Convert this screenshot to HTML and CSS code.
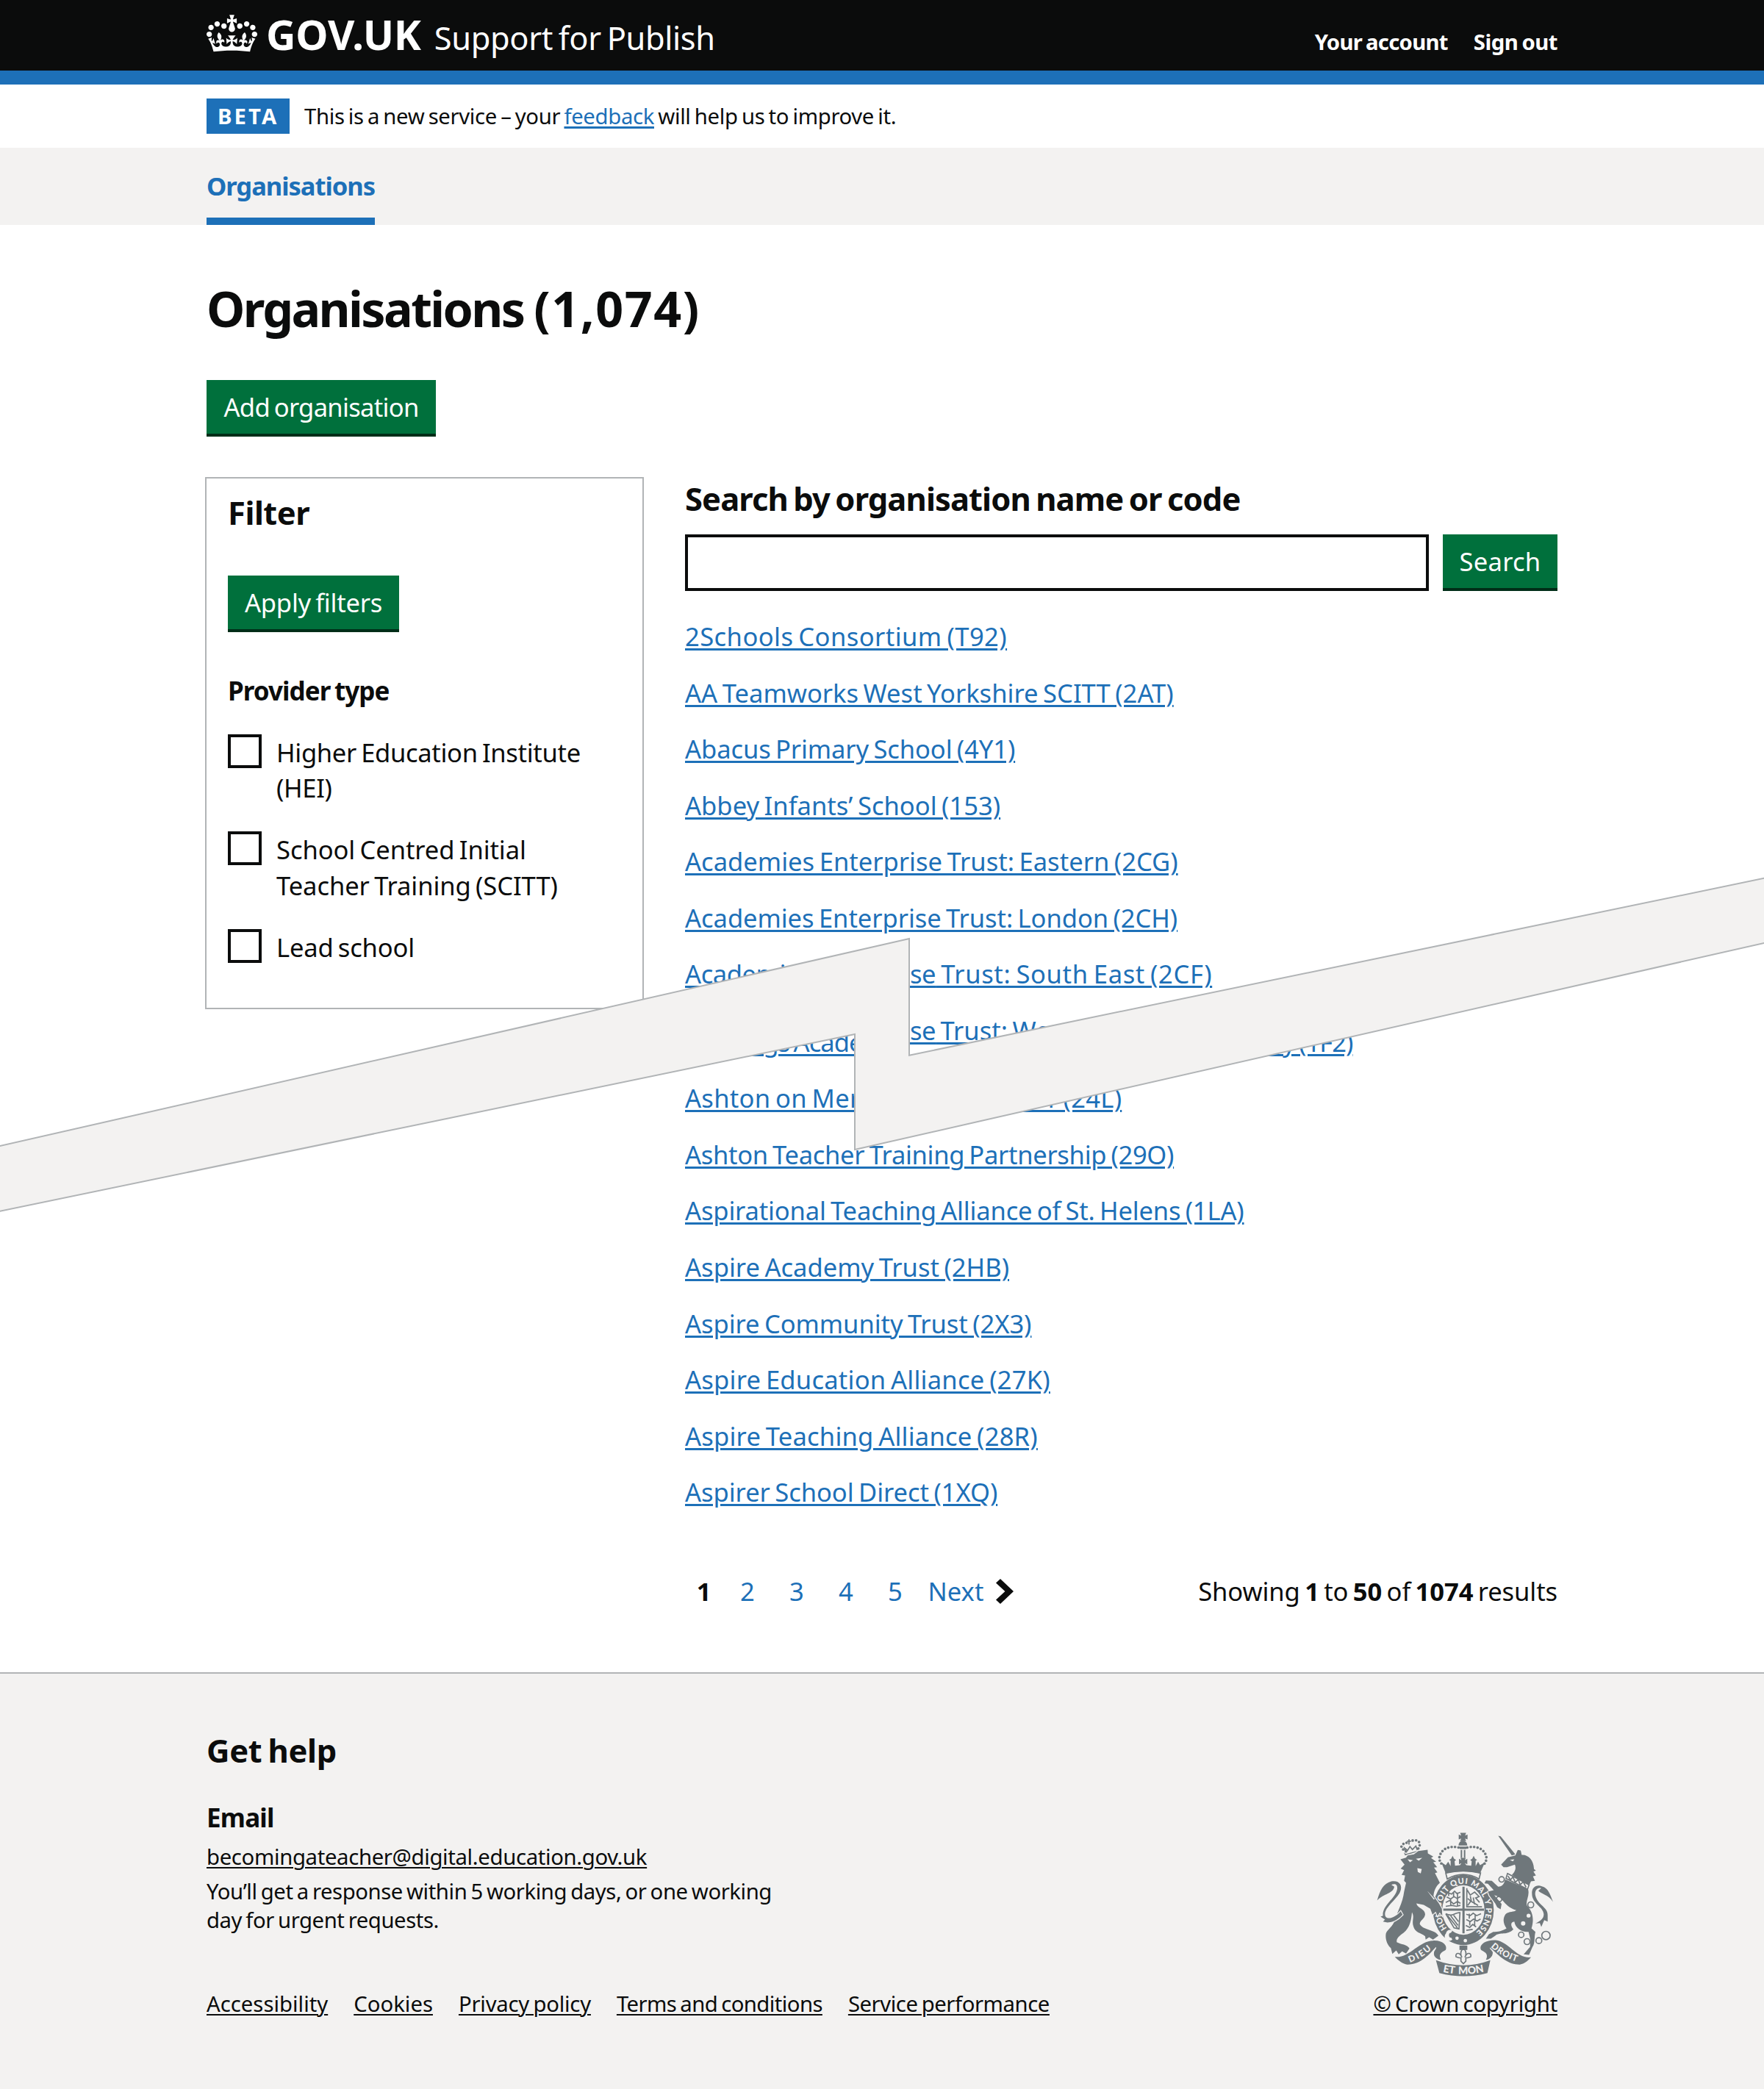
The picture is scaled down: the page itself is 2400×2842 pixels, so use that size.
FILE: index.html
```html
<!DOCTYPE html>
<html lang="en">
<head>
<meta charset="utf-8">
<title>Organisations - Support for Publish</title>
<link rel="stylesheet" href="styles.css">
</head>
<body>
<header class="header">
  <div class="width header-row">
    <svg class="crown" viewBox="0 0 132 97" aria-hidden="true"><path fill="currentColor" fill-rule="evenodd" d="M25 30.2c3.5 1.5 7.7-.2 9.1-3.7 1.5-3.6-.2-7.8-3.9-9.2-3.6-1.4-7.6.3-9.1 3.9-1.4 3.5.3 7.5 3.9 9zM9 39.5c3.6 1.5 7.8-.2 9.2-3.7 1.5-3.6-.2-7.8-3.9-9.1-3.6-1.5-7.6.2-9.1 3.8-1.4 3.5.3 7.5 3.8 9zM4.4 57.2c3.5 1.5 7.7-.2 9.1-3.8 1.5-3.6-.2-7.7-3.9-9.1-3.5-1.5-7.6.3-9.1 3.8-1.4 3.5.3 7.6 3.9 9.1zm38.3-21.4c3.5 1.5 7.7-.2 9.1-3.8 1.5-3.6-.2-7.7-3.9-9.1-3.6-1.5-7.6.3-9.1 3.8-1.3 3.6.4 7.7 3.9 9.1zm64.4-5.6c-3.6 1.5-7.8-.2-9.1-3.7-1.5-3.6.2-7.8 3.8-9.2 3.6-1.4 7.7.3 9.2 3.9 1.3 3.5-.4 7.5-3.9 9zm15.9 9.3c-3.6 1.5-7.7-.2-9.1-3.7-1.5-3.6.2-7.8 3.7-9.1 3.6-1.5 7.7.2 9.2 3.8 1.5 3.5-.3 7.5-3.8 9zm4.7 17.7c-3.6 1.5-7.8-.2-9.2-3.8-1.5-3.6.2-7.7 3.9-9.1 3.6-1.5 7.7.3 9.2 3.8 1.3 3.5-.4 7.6-3.9 9.1zM89.3 35.8c-3.6 1.5-7.8-.2-9.2-3.8-1.4-3.6.2-7.7 3.9-9.1 3.6-1.5 7.7.3 9.2 3.8 1.4 3.6-.3 7.7-3.9 9.1zM69.7 17.7l8.9 4.7V9.3l-8.9 2.8c-.2-.3-.5-.6-.9-.9L72.4 0H59.6l3.5 11.2c-.3.3-.6.5-.9.9l-8.8-2.8v13.1l8.8-4.7c.3.3.6.7.9.9l-5 15.4v.1c-.2.8-.4 1.6-.4 2.4 0 4.1 3.1 7.5 7 8.1h.2c.3 0 .7.1 1 .1.4 0 .7 0 1-.1h.2c4-.6 7.1-4.1 7.1-8.1 0-.8-.1-1.7-.4-2.4V34l-5.1-15.4c.4-.2.7-.6 1-.9zM66 92.8c16.9 0 32.8 1.1 47.1 3.2 4-16.9 8.9-26.7 14-33.5l-9.6-3.4c1 4.9 1.1 7.2 0 10.2-1.5-1.4-3-4.3-4.2-8.7L108.6 76c2.8-2 5-3.2 7.5-3.3-4.4 9.4-10 11.9-13.6 11.2-4.3-.8-6.3-4.6-5.6-7.9 1-4.7 5.7-5.9 8-.5 4.3-8.7-3-11.4-7.6-8.8 7.1-7.2 7.9-13.5 2.1-21.1-8 6.1-8.1 12.3-4.5 20.8-4.7-5.4-12.1-2.5-9.5 6.2 3.4-5.2 7.9-2 7.2 3.1-.6 4.3-6.4 7.8-13.5 7.2-10.3-.9-10.9-8-11.2-13.8 2.5-.5 7.1 1.8 11 7.3L80.2 60c-4.1 4.4-8 5.3-12.3 5.4 1.4-4.4 8-11.6 8-11.6H55.5s6.4 7.2 7.9 11.6c-4.2-.1-8-1-12.3-5.4l1.4 16.4c3.9-5.5 8.5-7.7 10.9-7.3-.3 5.8-.9 12.8-11.1 13.8-7.2.6-12.9-2.9-13.5-7.2-.7-5 3.8-8.3 7.1-3.1 2.7-8.7-4.6-11.6-9.4-6.2 3.7-8.5 3.6-14.7-4.6-20.8-5.8 7.6-5 13.9 2.2 21.1-4.7-2.6-11.9.1-7.7 8.8 2.3-5.5 7.1-4.2 8.1.5.7 3.3-1.3 7.1-5.7 7.9-3.5.7-9-1.8-13.5-11.2 2.5.1 4.7 1.3 7.5 3.3l-4.7-15.4c-1.2 4.4-2.7 7.2-4.3 8.7-1.1-3-.9-5.3 0-10.2l-9.5 3.4c5 6.9 9.9 16.7 14 33.5 14.8-2.1 30.8-3.2 47.7-3.2z"/></svg>
    <span class="logo">GOV.UK</span>
    <span class="service">Support for Publish</span>
    <nav class="account">
      <a class="account-you">Your account</a>
      <a class="account-out">Sign out</a>
    </nav>
  </div>
</header>
<div class="width phase">
  <strong class="tag">BETA</strong>
  <span class="phase-text">This is a new service – your <a class="link">feedback</a> will help us to improve it.</span>
</div>
<nav class="primary">
  <div class="width">
    <a class="primary-link">Organisations</a>
  </div>
</nav>
<main class="width main">
  <h1 class="title">Organisations <span class="title-count">(1,074)</span></h1>
  <button class="button button-add">Add organisation</button>
  <div class="columns">
    <aside class="filter">
      <h2 class="heading heading-filter">Filter</h2>
      <button class="button button-apply">Apply filters</button>
      <h3 class="subheading provider">Provider type</h3>
      <label class="check"><span class="box"></span><span class="check-text check-hei">Higher Education Institute (HEI)</span></label>
      <label class="check"><span class="box"></span><span class="check-text">School Centred Initial Teacher Training (SCITT)</span></label>
      <label class="check"><span class="box"></span><span class="check-text check-lead">Lead school</span></label>
    </aside>
    <section class="results">
      <h2 class="heading heading-search">Search by organisation name or code</h2>
      <div class="search">
        <input class="search-input" type="text" aria-label="Search by organisation name or code">
        <button class="button button-search">Search</button>
      </div>
      <ul class="list list-top">
        <li><a class="link">2Schools Consortium (T92)</a></li>
        <li><a class="link">AA Teamworks West Yorkshire SCITT (2AT)</a></li>
        <li><a class="link">Abacus Primary School (4Y1)</a></li>
        <li><a class="link">Abbey Infants’ School (153)</a></li>
        <li><a class="link">Academies Enterprise Trust: Eastern (2CG)</a></li>
        <li><a class="link">Academies Enterprise Trust: London (2CH)</a></li>
        <li><a class="link"><span class="tight">Academies Enterprise</span> Trust: South East (2CF)</a></li>
        <li><a class="link"><span class="tight">Academies Enterprise</span> Trust: West (2CE)</a></li>
      </ul>
      <ul class="list list-bottom">
        <li><a class="link">Ark Kings Academy and Teaching Partnership Academy (1F2)</a></li>
        <li><a class="link">Ashton on Mersey School SCITT (24L)</a></li>
        <li><a class="link">Ashton Teacher Training Partnership (29O)</a></li>
        <li><a class="link">Aspirational Teaching Alliance of St. Helens (1LA)</a></li>
        <li><a class="link">Aspire Academy Trust (2HB)</a></li>
        <li><a class="link">Aspire Community Trust (2X3)</a></li>
        <li><a class="link">Aspire Education Alliance (27K)</a></li>
        <li><a class="link">Aspire Teaching Alliance (28R)</a></li>
        <li><a class="link">Aspirer School Direct (1XQ)</a></li>
      </ul>
      <div class="paging">
        <div class="pages">
          <strong class="page page-current">1</strong><a class="page">2</a><a class="page">3</a><a class="page">4</a><a class="page">5</a>
          <a class="next">Next</a>
          <svg class="chevron" viewBox="0 0 24 34" aria-hidden="true"><path fill="currentColor" d="M6 0 24 17 6 34 0 28.6 12.4 17 0 5.4z"/></svg>
        </div>
        <p class="showing">Showing <b>1</b> to <b>50</b> of <b>1074</b> results</p>
      </div>
    </section>
  </div>
</main>
<footer class="footer">
  <div class="width footer-row">
    <div>
      <h2 class="heading heading-help">Get help</h2>
      <h3 class="subheading heading-email">Email</h3>
      <p class="small"><a class="footer-link mail">becomingateacher@digital.education.gov.uk</a></p>
      <p class="small response">You’ll get a response within 5 working days, or one working day for urgent requests.</p>
      <div class="small footer-links">
        <a class="footer-link">Accessibility</a>
        <a class="footer-link">Cookies</a>
        <a class="footer-link privacy">Privacy policy</a>
        <a class="footer-link terms">Terms and conditions</a>
        <a class="footer-link performance">Service performance</a>
      </div>
    </div>
    <div class="crest-column">
      <svg class="crest" viewBox="70 38 723 590" aria-hidden="true">
        <defs>
          <path id="garter" d="M332 358A92 108 0 0 1 516 358A92 108 0 0 1 424 466"/>
          <path id="garter-low" d="M358 433A92 108 0 0 1 332 352"/>
          <path id="scroll-left" d="M204 572Q260 552 304 508"/>
          <path id="scroll-mid" d="M330 607Q424 630 518 607"/>
          <path id="scroll-right" d="M534 506Q580 550 650 571"/>
        </defs>
        <!-- garter and shield -->
        <g fill="currentColor">
          <path fill-rule="evenodd" d="M424 214A124 143 0 1 1 424 500A124 143 0 1 1 424 214zM424 256A86 101 0 1 0 424 458A86 101 0 1 0 424 256z"/>
          <path d="M420 262h9v190h-9zM342 351h166v9H342z"/>
        </g>
        <g class="crest-line">
          <path d="M352 372C382 388 392 364 410 368L406 434 386 430 352 372M360 380 400 430M372 380 402 420M384 378 404 404"/>
          <path d="M358 286 376 292 388 280 398 290 412 284M356 304 372 312 386 302 398 310 412 302M352 326 368 318 384 332 400 322 412 330M352 342 376 338 396 342 412 338M364 280v20M384 284v18M400 286v52M372 314v24"/>
          <path d="M440 276 452 296 470 284 488 302 474 308 490 326M442 338 456 318 452 300M464 306 470 334M442 310 456 322 484 338M438 268v76h62"/>
          <path d="M436 374 452 380 464 370 478 380 496 372M436 396 452 404 466 394 480 402 494 394M434 420 450 428 462 416 476 426M448 372v20M472 374v24M450 402v18M470 400v20M436 440 462 436"/>
        </g>
        <g class="crest-text">
          <text font-size="33"><textPath href="#garter" startOffset="14" textLength="402">SOIT QUI MAL Y PENSE</textPath></text>
          <text font-size="33"><textPath href="#garter-low" startOffset="2">HON</textPath></text>
        </g>
        <!-- royal crown -->
        <path class="crest-line" d="M352 206Q424 190 494 206L488 230Q424 194 358 230z" fill="#f3f2f1"/>
        <g fill="currentColor">
          <path d="M411 42h24l-4 11 10-4v20l-10-4 4 11h-24l4-11-10 4v-20l10 4z"/>
          <path d="M404 94a18 20 0 0 1 36 0zM404 98h38l-6 10h-26zM413 112h6v32h-6zM426 112h6v32h-6z"/>
          <path d="M334 162 352 174 362 160 372 178 372 156 366 152 374 148 380 136 386 148 394 152 388 158 390 176 410 174 416 166 406 170V148L416 154 412 144H434L430 154 440 148V170L430 166 436 174 456 176 458 158 452 152 460 148 466 136 472 148 480 152 474 156 474 178 484 160 492 174 512 162 492 208C450 196 396 196 352 208z"/>
        </g>
        <!-- lion and unicorn -->
        <g class="crest-beasts">
          <path d="M186 134 181 122 189 128 242 114 246 122 240 118z"/>
          <path d="M167 150 190 143 196 134 222 130 240 116 278 111 279 126 301 139 292 145 313 160 301 162 317 182 304 184 318 203 308 206 328 246C310 262 304 280 302 300L324 330 336 352 338 380 327 367 319 382 311 364 298 376 289 352 262 336 232 330C238 352 266 350 268 374C266 394 246 398 246 414C258 440 310 436 322 462L300 478 284 468 270 478 268 464C250 450 226 450 220 424C212 400 226 386 214 366C212 394 206 430 180 450C160 464 150 474 152 488C170 498 194 496 204 514L190 535 174 526 160 538 150 522 134 536 128 512C112 498 104 474 108 452C116 434 134 428 146 396C156 358 176 330 182 282L190 246 182 238 186 216 172 214 182 194 168 188 184 172z"/>
          <path d="M72 318C84 276 96 250 130 240C160 234 178 254 166 282C154 312 104 344 104 374C104 398 138 396 168 362L176 376C150 404 128 408 114 408L96 404 104 396 86 384 96 380C90 340 150 308 154 270C156 250 142 248 130 254L142 262C138 290 100 290 72 318z"/>
          <path d="M566 54 576 56 638 132 624 138z"/>
          <path d="M578 172 606 142 636 134 646 112 658 114 662 132C690 130 712 156 712 190L720 196 710 200 720 216 708 220 716 238 700 240 690 262 650 232 622 214C640 196 638 180 634 172L602 182 588 182z"/>
          <path d="M594 232 688 272C696 300 676 320 684 340C706 362 714 392 702 432L718 446C712 470 718 490 706 508L692 540 670 538 696 508 698 480 690 446C660 448 636 430 632 404C616 406 616 420 628 436C604 462 572 446 554 462L536 474 516 474 528 456 546 446C570 448 590 438 600 432C586 412 584 392 596 374C610 362 632 366 640 358C612 350 596 332 584 318C570 300 560 300 550 296L580 332 576 354 562 346 554 330 530 298 524 282 548 276 524 250 510 248 516 236 540 238 566 262C584 262 592 248 594 232z"/>
          <path d="M790 324C770 292 740 292 730 278L742 268C724 262 714 280 718 298C726 336 770 346 768 378L768 404 754 398 742 426 736 410 718 412C740 400 752 392 752 374C750 344 704 330 704 292C702 264 722 252 744 260C770 266 778 292 790 324z"/>
        </g>
        <!-- ribbons -->
        <g fill="currentColor">
          <path d="M144 548C200 556 244 482 300 482C340 480 360 502 352 520C336 530 320 536 332 560C322 560 300 550 304 530C306 520 316 516 312 508C288 534 252 580 196 580C174 576 158 562 144 548z"/>
          <path d="M700 550C640 556 610 486 556 480C510 478 486 502 496 520C512 530 528 536 516 560C526 560 544 550 544 530C540 520 530 516 532 510C560 532 596 580 654 580C676 576 690 562 700 550z"/>
          <path d="M312 562Q424 604 534 562L522 614Q424 640 326 614z"/>
          <path d="M408 502h32v18h-32z"/>
        </g>
        <path class="crest-line" d="M424 514C438 524 436 540 430 550C440 526 458 532 454 548L442 552 434 552 434 566 424 576 414 566 414 552 406 552 394 548C390 532 408 526 418 550C412 540 410 524 424 514z"/>
        <g class="crest-dots">
          <path d="M404 102C370 94 334 104 326 142C326 160 332 168 344 176"/>
          <path d="M440 102C474 94 510 104 518 142C518 160 512 168 502 176"/>
          <path d="M190 118C172 108 166 98 176 90C184 82 194 84 204 78M240 106C250 92 246 78 236 74C226 70 214 74 206 76"/>
        </g>
        <path class="crest-line" d="M202 68v22M194 76h16M188 122 184 104 196 114 206 98 216 110 230 96 236 112"/>
        <g class="crest-chain">
          <circle cx="580" cy="232" r="11"/><circle cx="570" cy="312" r="11"/><circle cx="699" cy="336" r="12"/><circle cx="660" cy="458" r="11"/><circle cx="684" cy="486" r="12"/><circle cx="732" cy="482" r="12"/><circle cx="761" cy="461" r="17"/>
        </g>
        <g fill="#f3f2f1">
          <path d="M196 150 218 154 206 162zM230 148 256 144 242 156zM236 186 254 190 250 208 238 202zM614 152 632 150 626 158z"/>
          <path d="M604 208 692 254 686 272 598 228z"/>
          <circle cx="690" cy="380" r="8"/><circle cx="668" cy="412" r="9"/><circle cx="398" cy="472" r="7"/><circle cx="432" cy="482" r="7"/>
          <path d="M353 452a16 18 0 0 1 26-10l-6 8a8 9 0 1 0 2 20l4 8a18 18 0 0 1-26-26zM276 278 308 312 303 314z"/>
        </g>
        <path class="crest-line" d="M604 208 692 254 686 272 598 228zM606 218 616 234 626 222 636 244 648 232 656 254 668 242 680 264"/>
        <g class="crest-text">
          <text font-size="36"><textPath href="#scroll-left" startOffset="2" textLength="104">DIEU</textPath></text>
          <text class="crest-motto" font-size="42"><textPath href="#scroll-mid" startOffset="10" textLength="170">ET MON</textPath></text>
          <text font-size="36"><textPath href="#scroll-right" startOffset="2" textLength="122">DROIT</textPath></text>
        </g>
      </svg>
      <a class="small footer-link copyright">© Crown copyright</a>
    </div>
  </div>
</footer>
<svg class="break" viewBox="0 0 2400 480" aria-hidden="true"><path d="M-4 370 1237 87V245.700L2404 4V92L1163 374V217L-4 458.500z" fill="#f3f2f1" stroke="#b1b4b6" stroke-width="2"/></svg>
</body>
</html>
```
FILE: styles.css
```css
* { box-sizing: border-box; }

body {
  position: relative;
  margin: 0;
  width: 2400px;
  height: 2842px;
  overflow-x: hidden;
  background: #fff;
  color: #0b0c0c;
  font-family: "Noto Sans", "Open Sans", sans-serif;
  font-size: 34.6px;
  line-height: 48px;
  word-spacing: -2.5px;
}

h1, h2, h3, p, ul { margin: 0; padding: 0; }
ul { list-style: none; }

.width { width: 1838px; margin: 0 auto; }

.link {
  color: #1d70b8;
  text-decoration: underline;
  text-decoration-thickness: 2.5px;
  text-underline-offset: 3px;
}

/* Header */
.header { height: 115px; background: #0b0c0c; border-bottom: 19px solid #1d70b8; color: #fff; }
.header-row { display: flex; align-items: baseline; padding-top: 18px; white-space: nowrap; }
.crown { align-self: flex-start; width: 69px; height: 51px; margin: 2px 12px 0 0; }
.logo { font-size: 56px; line-height: 56px; font-weight: 700; margin-right: 18px; letter-spacing: -.2px; }
.service { font-size: 43.4px; line-height: 56px; letter-spacing: -.39px; word-spacing: -3px; }
.account { display: flex; gap: 35px; margin-left: auto; font-size: 29.3px; line-height: 40px; font-weight: 700; word-spacing: -2px; }
.account-you { letter-spacing: -.72px; }
.account-out { letter-spacing: -.5px; }

/* Phase banner */
.phase { display: flex; align-items: center; gap: 20px; height: 86px; font-size: 29.3px; }
.tag { display: flex; align-items: center; width: 113px; height: 48px; padding-left: 15px; background: #1d70b8; color: #fff; letter-spacing: 3.1px; }
.phase-text { letter-spacing: -.35px; word-spacing: -2px; }

/* Primary navigation */
.primary { height: 105px; background: #f3f2f1; }
.primary-link {
  display: inline-block;
  height: 105px;
  padding-top: 28px;
  border-bottom: 10px solid #1d70b8;
  color: #1d70b8;
  font-weight: 700;
  letter-spacing: -1.06px;
}

/* Main */
.main { padding-top: 65px; }
.title { margin-bottom: 50px; font-size: 66.3px; line-height: 96px; letter-spacing: -2.6px; word-spacing: -1px; }
.title-count { letter-spacing: 1.6px; }
.heading { font-size: 43.5px; line-height: 57px; word-spacing: -3px; }
.subheading { font-size: 35px; line-height: 48px; }

.button {
  display: flex;
  align-items: center;
  justify-content: center;
  height: 77px;
  padding: 0;
  border: 0;
  border-bottom: 4px solid #002d18;
  background: #00703c;
  color: #fff;
  font: inherit;
  word-spacing: inherit;
  white-space: nowrap;
}
.button-add { width: 312px; letter-spacing: -.72px; }
.button-apply { width: 233px; letter-spacing: -.25px; }
.button-search { width: 156px; letter-spacing: .26px; }

.columns { display: flex; align-items: flex-start; gap: 56px; margin-top: 55px; }
.filter {
  width: 597px;
  height: 724px;
  margin-left: -2px;
  padding: 18px 29px 0;
  border: 2px solid #b1b4b6;
}
.heading-filter { letter-spacing: -.5px; }
.filter .button { margin-top: 57px; }
.provider { margin: 56px 0 35px; letter-spacing: -.95px; }
.check { display: flex; gap: 20px; margin-bottom: 35px; line-height: 48.2px; }
.check-text { margin-top: 1px; letter-spacing: -.1px; }
.check-hei { letter-spacing: -.33px; }
.check-lead { letter-spacing: -.19px; }
.box { flex: none; width: 46px; height: 46px; border: 4px solid #0b0c0c; }

.results { width: 1187px; }
.heading-search { line-height: 58px; letter-spacing: -.9px; }
.search { display: flex; gap: 19px; margin-top: 20px; }
.search-input { flex: 1; height: 77px; border: 4px solid #0b0c0c; background: #fff; padding: 0 10px; font: inherit; }

.list li { height: 76.58px; line-height: 48px; white-space: nowrap; }

/* The two lists meet under the torn strip, so each stops at its centre line. */
.list-top { margin-top: 38px; clip-path: polygon(-10px -10px, 1200px -10px, 1200px 459px, 268px 649px, 268px 500px, -10px 550px); }
.list-bottom { margin-top: -60.9px; clip-path: polygon(-10px 0, 268px -52px, 268px 98px, 1200px -93px, 1200px 700px, -10px 700px); }

.list-top li:nth-child(1) { letter-spacing: .42px; }
.list-top li:nth-child(3) { letter-spacing: -.11px; }
.list-top li:nth-child(6) { letter-spacing: -.07px; }
.list-top li:nth-child(7) { letter-spacing: .62px; }
.tight { letter-spacing: -.45px; }
.list-bottom li:nth-child(1) { letter-spacing: -.98px; }
.list-bottom li:nth-child(2) { letter-spacing: .25px; }
.list-bottom li:nth-child(3) { letter-spacing: -.32px; }
.list-bottom li:nth-child(4) { letter-spacing: -.18px; }
.list-bottom li:nth-child(6) { letter-spacing: -.07px; }
.list-bottom li:nth-child(7) { letter-spacing: .21px; }
.list-bottom li:nth-child(8) { letter-spacing: .19px; }
.list-bottom li:nth-child(9) { letter-spacing: -.06px; }

.paging { display: flex; justify-content: space-between; margin-top: 58px; }
.pages { display: flex; align-items: center; }
.page { width: 67px; text-align: center; color: #1d70b8; }
.page-current { width: 51.5px; color: #0b0c0c; }
.next { margin: 0 17px 0 11px; color: #1d70b8; }
.chevron { width: 24px; height: 34px; }
.showing { letter-spacing: -.1px; }

/* Footer */
.footer { margin-top: 86px; height: 567px; border-top: 2px solid #b1b4b6; background: #f3f2f1; }
.footer-row { display: flex; justify-content: space-between; align-items: flex-end; padding-top: 76px; }
.heading-help { letter-spacing: -.3px; }
.heading-email { margin: 39px 0 10px; letter-spacing: -.8px; }
.small { font-size: 29.3px; line-height: 38.4px; word-spacing: -2px; }
.footer-link { color: #0b0c0c; text-decoration: underline; text-decoration-thickness: 2px; text-underline-offset: 3px; white-space: nowrap; }
.mail { letter-spacing: -.35px; }
.response { width: 800px; margin-top: 9px; letter-spacing: -.44px; }
.footer-links { display: flex; gap: 35px; margin-top: 76px; }
.privacy { letter-spacing: -.23px; }
.terms { letter-spacing: -.58px; }
.performance { letter-spacing: -.44px; }
.copyright { letter-spacing: -.23px; }
.crest-column { display: flex; flex-direction: column; align-items: center; gap: 18px; }
.crest { width: 241px; height: 197px; color: #6f777b; }
.crest-beasts { fill: #6f777b; stroke: #f3f2f1; stroke-width: 7; paint-order: stroke; }
.crest-line { fill: none; stroke: #6f777b; stroke-width: 5; }
.crest-dots { fill: none; stroke: #6f777b; stroke-width: 11; stroke-linecap: round; stroke-dasharray: 0 14; }
.crest-chain { fill: none; stroke: #6f777b; stroke-width: 5; }
.crest-text { fill: #f3f2f1; font-family: Lato, sans-serif; font-weight: 900; word-spacing: 0; }
.crest-motto { word-spacing: 6px; }

/* Torn strip across the page */
.break { position: absolute; left: 0; top: 1190px; width: 2400px; height: 480px; }
```
